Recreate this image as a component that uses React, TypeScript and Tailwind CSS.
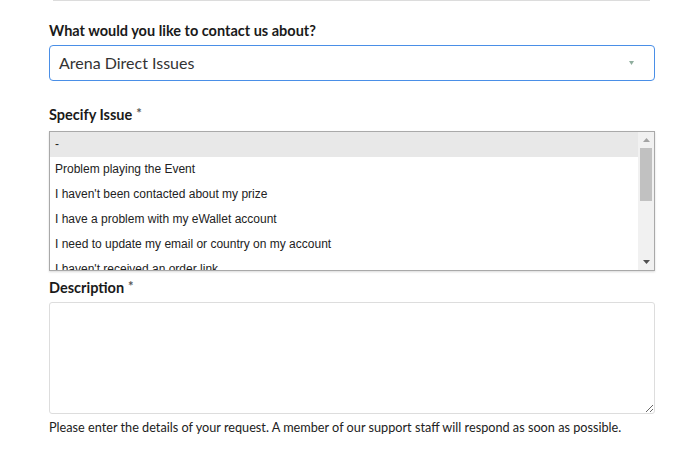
import React from 'react'

const ISSUES = [
  '-',
  'Problem playing the Event',
  "I haven't been contacted about my prize",
  'I have a problem with my eWallet account',
  'I need to update my email or country on my account',
  "I haven't received an order link",
]

function FieldLabel({ children, required }: { children: React.ReactNode; required?: boolean }) {
  return (
    <label className="block h-4 text-[14.5px] leading-4 font-bold text-[#1a1a1a]">
      {children}
      {required && <span className="relative -top-[2px] ml-[4px] text-[13px] leading-none text-[#555]">*</span>}
    </label>
  )
}

function IssueList() {
  return (
    <div className="relative h-[140px] border border-[#a9a9a9] bg-white shadow-[0_1px_2px_rgba(0,0,0,0.15)] overflow-hidden">
      <ul className="pr-[16px] font-['Liberation_Sans',Arial,sans-serif] text-[12px] text-[#222]">
        {ISSUES.map((issue, i) => (
          <li
            key={issue}
            className={`h-[25px] leading-[25px] px-[5px] whitespace-nowrap ${i === 0 ? 'bg-[#e8e8e8]' : ''}`}
          >
            {issue}
          </li>
        ))}
      </ul>
      {/* fake scrollbar */}
      <div className="absolute top-0 right-0 bottom-0 w-[16px] bg-[#f1f1f1] flex flex-col items-center">
        <div className="h-[16px] flex items-center justify-center">
          <svg width="7" height="4" viewBox="0 0 7 4">
            <path d="M0 4 L3.5 0 L7 4 Z" fill="#a3a3a3" />
          </svg>
        </div>
        <div className="w-[12px] h-[53px] bg-[#c1c1c1]" />
        <div className="flex-1" />
        <div className="h-[16px] flex items-center justify-center">
          <svg width="7" height="4" viewBox="0 0 7 4">
            <path d="M0 0 L7 0 L3.5 4 Z" fill="#505050" />
          </svg>
        </div>
      </div>
    </div>
  )
}

export default function App() {
  return (
    <div className="w-[680px] h-[455px] bg-white font-['Lato','Noto_Sans',sans-serif] overflow-hidden">
      <div className="ml-[53px] w-[597px] h-px bg-[#dcdcdc]" />
      <div className="px-[49px]">
        <div className="w-[606px] pt-[22px]">
          <FieldLabel>What would you like to contact us about?</FieldLabel>
          <div className="mt-[6px] h-[36px] border border-[#4a8fe7] rounded-[4px] flex items-center px-[9px]">
            <span className="flex-1 text-[16px] text-[#333]">Arena Direct Issues</span>
            <svg width="5" height="4" viewBox="0 0 5 4" className="mr-[11px]">
              <path d="M0 0 L5 0 L2.5 4 Z" fill="#8fae9e" />
            </svg>
          </div>

          <div className="mt-[26px]">
            <FieldLabel required>Specify Issue</FieldLabel>
          </div>
          <div className="mt-[8px]">
            <IssueList />
          </div>

          <div className="mt-[9px]">
            <FieldLabel required>Description</FieldLabel>
          </div>
          <textarea className="mt-[6px] block w-full h-[112px] border border-[#dddddd] rounded-[3px] bg-white outline-none" />
          <p className="mt-[5px] text-[12.7px] leading-4 text-[#222] whitespace-nowrap">
            Please enter the details of your request. A member of our support staff will respond as soon as possible.
          </p>
        </div>
      </div>
    </div>
  )
}
